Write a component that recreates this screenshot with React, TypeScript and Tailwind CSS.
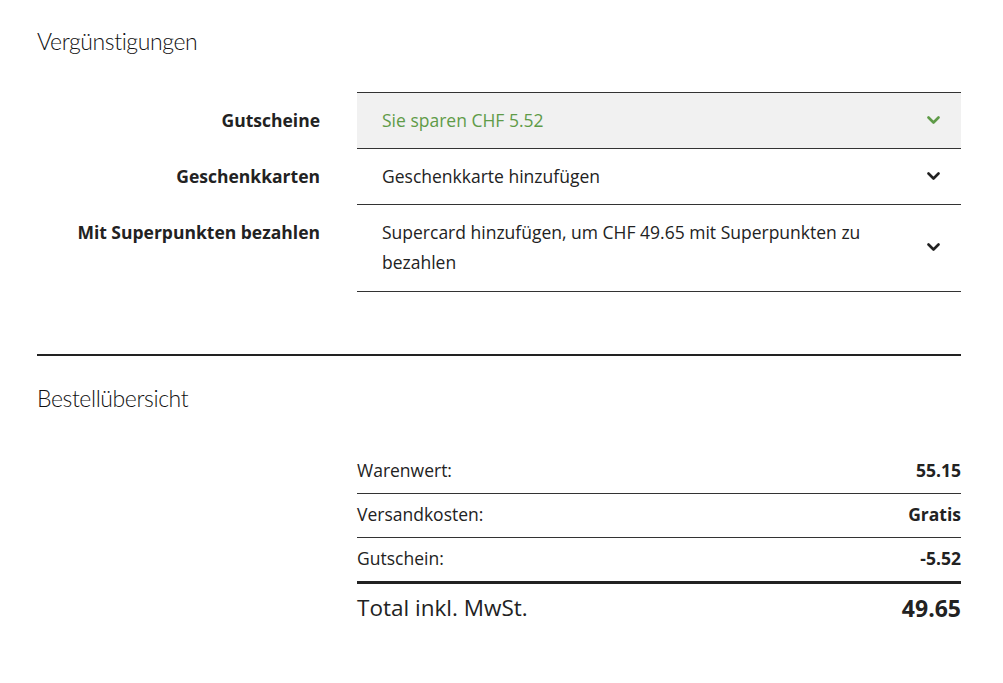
import React from "react";

const body = { fontFamily: '"Open Sans", "Liberation Sans", sans-serif' };
const head = { fontFamily: 'Lato, "Liberation Sans", sans-serif' };

function Chevron({ color }: { color: string }) {
  return (
    <svg width="13" height="9" viewBox="0 0 13 9" className="shrink-0">
      <path d="M1.5 1.5 L6.5 6.5 L11.5 1.5" fill="none" stroke={color} strokeWidth="2.6" strokeLinecap="round" strokeLinejoin="round" />
    </svg>
  );
}

type Perk = { label: string; text: string; active?: boolean };

const perks: Perk[] = [
  { label: "Gutscheine", text: "Sie sparen CHF 5.52", active: true },
  { label: "Geschenkkarten", text: "Geschenkkarte hinzufügen" },
  { label: "Mit Superpunkten bezahlen", text: "Supercard hinzufügen, um CHF 49.65 mit Superpunkten zu bezahlen" },
];

const lines = [
  { label: "Warenwert:", value: "55.15" },
  { label: "Versandkosten:", value: "Gratis" },
  { label: "Gutschein:", value: "-5.52" },
];

export default function App() {
  return (
    <div className="w-[1003px] h-[683px] bg-white text-[#222] pl-[37px] pr-[42px] pt-[26px]" style={body}>
      <h2 className="text-[23px] font-light text-[#111] leading-[30px] tracking-[-0.4px]" style={head}>
        Vergünstigungen
      </h2>

      <div className="mt-[36px]">
        {perks.map((p, i) => (
          <div key={p.label} className="flex">
            <div className={`w-[283px] shrink-0 text-right text-[17.5px] font-bold leading-[30px] ${i === 0 ? "pt-[13px]" : "pt-[12px]"}`}>
              {p.label}
            </div>
            <div
              className={`ml-[37px] flex-1 flex items-center border-b border-[#333] pl-[25px] pr-[21px] pt-[12px] ${
                i === 0 ? "border-t bg-[#f1f1f1] pb-[13px]" : i === 2 ? "pb-[14px]" : "pb-[13px]"
              }`}
            >
              <div className={`flex-1 pr-[40px] text-[17.5px] leading-[30px] ${p.active ? "text-[#5f9b48]" : ""}`}>
                {p.text}
              </div>
              <Chevron color={p.active ? "#5f9b48" : "#222"} />
            </div>
          </div>
        ))}
      </div>

      <div className="mt-[62px] h-[2px] bg-[#222]" />

      <h2 className="mt-[27px] text-[23px] font-light text-[#111] leading-[30px] tracking-[-0.4px]" style={head}>
        Bestellübersicht
      </h2>

      <div className="ml-[320px] mt-[37px]">
        {lines.map((l, i) => (
          <div
            key={l.label}
            className={`flex justify-between text-[17.5px] leading-[23px] pt-[9px] pb-[11px] ${
              i < lines.length - 1 ? "border-b border-[#333]" : "border-b-[3px] border-[#222]"
            }`}
          >
            <span>{l.label}</span>
            <span className="font-bold">{l.value}</span>
          </div>
        ))}
        <div className="flex justify-between items-center leading-[30px] pt-[9px]">
          <span className="text-[22.5px]">Total inkl. MwSt.</span>
          <span className="text-[23px] font-bold">49.65</span>
        </div>
      </div>
    </div>
  );
}
